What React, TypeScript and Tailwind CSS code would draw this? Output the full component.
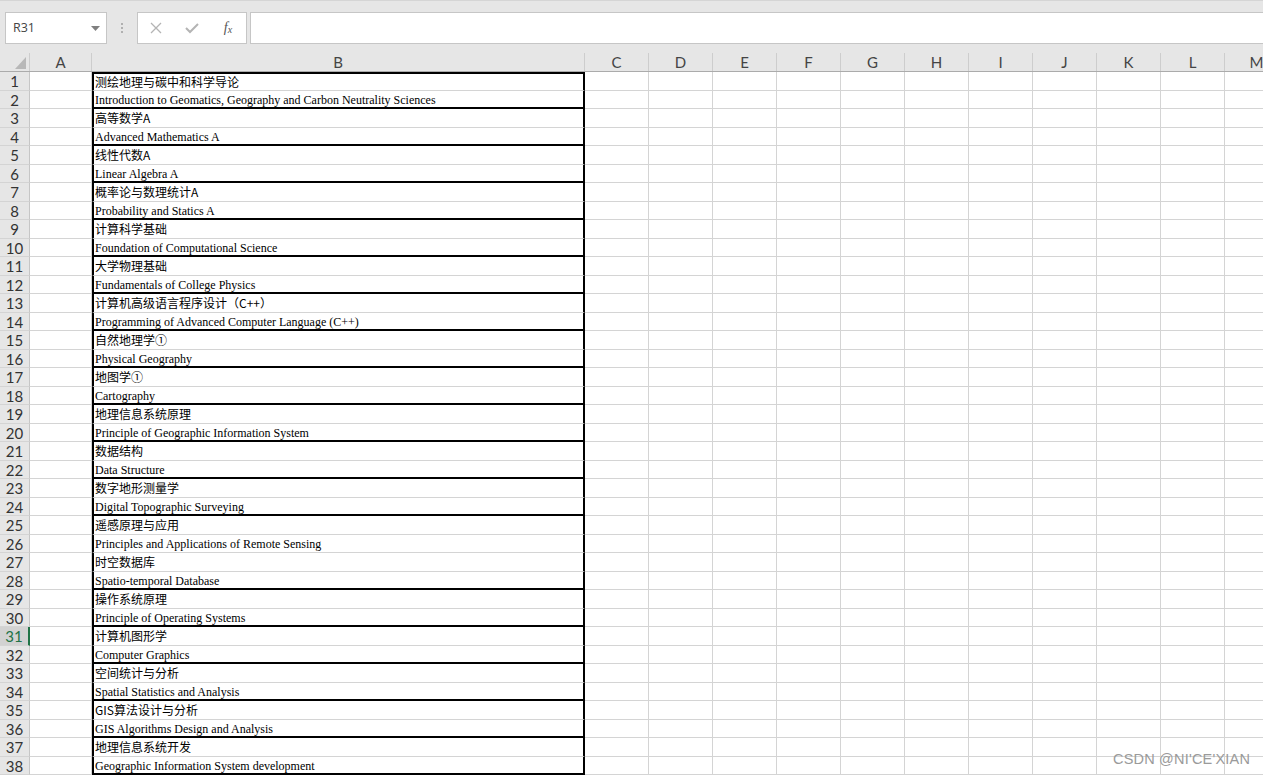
import clsx from "clsx";

type Course = [string, string];

const courses: Course[] = [
  ["测绘地理与碳中和科学导论", "Introduction to Geomatics, Geography and Carbon Neutrality Sciences"],
  ["高等数学A", "Advanced Mathematics A"],
  ["线性代数A", "Linear Algebra A"],
  ["概率论与数理统计A", "Probability and Statics A"],
  ["计算科学基础", "Foundation of Computational Science"],
  ["大学物理基础", "Fundamentals of College Physics"],
  ["计算机高级语言程序设计（C++）", "Programming of Advanced Computer Language (C++)"],
  ["自然地理学①", "Physical Geography"],
  ["地图学①", "Cartography"],
  ["地理信息系统原理", "Principle of Geographic Information System"],
  ["数据结构", "Data Structure"],
  ["数字地形测量学", "Digital Topographic Surveying"],
  ["遥感原理与应用", "Principles and Applications of Remote Sensing"],
  ["时空数据库", "Spatio-temporal Database"],
  ["操作系统原理", "Principle of Operating Systems"],
  ["计算机图形学", "Computer Graphics"],
  ["空间统计与分析", "Spatial Statistics and Analysis"],
  ["GIS算法设计与分析", "GIS Algorithms Design and Analysis"],
  ["地理信息系统开发", "Geographic Information System development"],
];

const extraCols = ["C", "D", "E", "F", "G", "H", "I", "J", "K", "L", "M"];

const headFont = "font-['Lato','Liberation_Sans',sans-serif]";

const FormulaBar = () => (
  <div className="flex h-[53px] items-start border-t border-[#d5d5d5] bg-[#e6e6e6] pl-[5px] pt-[11px]">
    <div className="flex h-[32px] w-[102px] shrink-0 items-center justify-between border border-[#c6c6c6] bg-white pl-[7px] pr-[6px] font-['Open_Sans',sans-serif] text-[12.5px] text-[#444]">
      <span>R31</span>
      <svg width="9" height="5" viewBox="0 0 9 5">
        <polygon points="0,0 9,0 4.5,5" fill="#808080" />
      </svg>
    </div>
    <div className="flex h-[32px] w-[30px] shrink-0 flex-col items-center justify-center gap-[2px]">
      <span className="h-[2px] w-[2px] bg-[#b0b0b0]" />
      <span className="h-[2px] w-[2px] bg-[#b0b0b0]" />
      <span className="h-[2px] w-[2px] bg-[#b0b0b0]" />
    </div>
    <div className="flex h-[32px] w-[110px] shrink-0 items-center border border-[#c6c6c6] bg-white">
      <div className="flex w-[36px] justify-center">
        <svg width="12" height="12" viewBox="0 0 12 12">
          <path d="M1 1 L11 11 M11 1 L1 11" stroke="#b4b4b4" strokeWidth="1.3" />
        </svg>
      </div>
      <div className="flex w-[36px] justify-center">
        <svg width="14" height="12" viewBox="0 0 14 12">
          <path d="M1 6 L5 10 L13 2" stroke="#b4b4b4" strokeWidth="2" fill="none" />
        </svg>
      </div>
      <div className="flex w-[36px] justify-center font-['Liberation_Serif',serif] italic text-[#555]">
        <span className="text-[14px] leading-none">f</span>
        <span className="mt-[4px] text-[10px] leading-none">x</span>
      </div>
    </div>
    <div className="ml-[3px] h-[32px] flex-1 border border-r-0 border-[#c6c6c6] bg-white" />
  </div>
);

const HeaderCell = ({ label, width }: { label: string; width: string }) => (
  <div
    className={clsx(
      "flex shrink-0 items-center justify-center border-r border-[#cdcdcd] pt-[1px] text-[15px] leading-none text-[#444]",
      width,
    )}
  >
    {label}
  </div>
);

const HeaderRow = () => (
  <div className={clsx("flex h-[19px] border-b border-[#ababab] bg-[#e6e6e6]", headFont)}>
    <div className="flex w-[30px] shrink-0 items-end justify-end border-r border-[#cdcdcd] pb-[2px] pr-[3px]">
      <svg width="11" height="12" viewBox="0 0 11 12">
        <polygon points="11,0 11,12 0,12" fill="#b8b8b8" />
      </svg>
    </div>
    <HeaderCell label="A" width="w-[62px]" />
    <HeaderCell label="B" width="w-[493px]" />
    {extraCols.map((c) => (
      <HeaderCell key={c} label={c} width="w-[64px]" />
    ))}
  </div>
);

const Row = ({ n, text, zh }: { n: number; text: string; zh: boolean }) => {
  const odd = n % 2 === 1;
  const thick = !odd && n !== 26;
  const selected = n === 31;

  return (
    <div className={clsx("flex", odd ? "h-[19px]" : "h-[18px]")}>
      <div
        className={clsx(
          "flex w-[30px] shrink-0 items-center justify-center border-b border-b-[#d4d4d4] pt-[1px] text-[15px] leading-none",
          headFont,
          selected
            ? "border-r-2 border-r-[#217346] bg-[#d2d2d2] text-[#217346]"
            : "border-r border-r-[#c6c6c6] bg-[#e6e6e6] text-[#333]",
        )}
      >
        {n}
      </div>
      <div className="w-[62px] shrink-0 border-b border-r border-[#d4d4d4]" />
      <div
        className={clsx(
          "flex w-[493px] shrink-0 items-center whitespace-nowrap border-x-2 border-x-black pl-[1px] text-[12px] leading-none text-black",
          thick ? "border-b-2 border-b-black" : "border-b border-b-[#d4d4d4]",
          n === 1 && "border-t-2 border-t-black",
          zh
            ? "font-['Noto_Sans_CJK_SC','Noto_Sans',sans-serif]"
            : "font-['Liberation_Serif','Noto_Sans_CJK_SC',serif] pt-[1px]",
        )}
      >
        {text}
      </div>
      {extraCols.map((c) => (
        <div key={c} className="w-[64px] shrink-0 border-b border-r border-[#d4d4d4]" />
      ))}
    </div>
  );
};

export default function App() {
  const rows = courses.flatMap(([cn, en]) => [
    { text: cn, zh: true },
    { text: en, zh: false },
  ]);

  return (
    <div className="relative h-[775px] w-[1263px] overflow-hidden bg-white">
      <FormulaBar />
      <HeaderRow />
      {rows.map((r, i) => (
        <Row key={i} n={i + 1} text={r.text} zh={r.zh} />
      ))}
      {/* blog watermark laid over the sheet */}
      <div className="absolute left-[1113px] top-[752px] font-['Liberation_Sans',sans-serif] text-[14.5px] leading-none tracking-[0.2px] text-[#9a9a9a]">
        CSDN @NI'CE'XIAN
      </div>
    </div>
  );
}
